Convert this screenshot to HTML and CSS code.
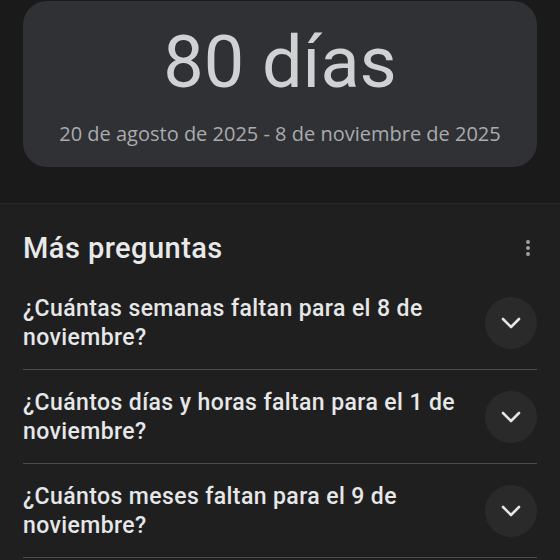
FILE: index.html
```html
<!DOCTYPE html>
<html lang="es">
<head>
  <meta charset="UTF-8" />
  <meta name="viewport" content="width=device-width, initial-scale=1.0"/>
  <title>Más preguntas</title>
  <link rel="stylesheet" href="styles.css">
</head>
<body>
  <div class="top">
    <div class="result-card">
      <div class="result-value">80 días</div>
      <div class="result-range">20 de agosto de 2025 - 8 de noviembre de 2025</div>
    </div>
  </div>

  <div class="questions">
    <div class="questions-head">
      <h2>Más preguntas</h2>
      <div class="more-btn">
        <span></span><span></span><span></span>
      </div>
    </div>

    <div class="question">
      <div class="question-text">¿Cuántas semanas faltan para el 8 de noviembre?</div>
      <div class="expand-btn">
        <svg width="20" height="12" viewBox="0 0 20 12"><path d="M2 2l8 8 8-8" /></svg>
      </div>
    </div>
    <div class="question">
      <div class="question-text">¿Cuántos días y horas faltan para el 1 de noviembre?</div>
      <div class="expand-btn">
        <svg width="20" height="12" viewBox="0 0 20 12"><path d="M2 2l8 8 8-8" /></svg>
      </div>
    </div>
    <div class="question">
      <div class="question-text">¿Cuántos meses faltan para el 9 de noviembre?</div>
      <div class="expand-btn">
        <svg width="20" height="12" viewBox="0 0 20 12"><path d="M2 2l8 8 8-8" /></svg>
      </div>
    </div>
  </div>
</body>
</html>
```

FILE: styles.css
```css
* { box-sizing: border-box; }
body {
  margin: 0;
  background-color: #1f1f1f;
  font-family: 'Open Sans', 'Noto Sans', sans-serif;
  color: #e8eaed;
  height: 560px;
  overflow: hidden;
}
.top {
  background-color: #1a1a1a;
  padding: 1px 23px 36px;
}
.result-card {
  background-color: #303134;
  border-radius: 24px;
  height: 166px;
  padding-top: 26px;
  text-align: center;
}
.result-value {
  font-family: Roboto, sans-serif;
  font-size: 72px; line-height: 72px;
  color: #d0d1d3;
}
.result-range {
  margin-top: 22px;
  font-size: 20px; line-height: 26px;
  color: #a9abae;
}
.questions {
  border-top: 1px solid #262626;
  padding: 26px 23px 0;
}
.questions-head {
  display: flex; align-items: center; justify-content: space-between;
  margin-bottom: 10px;
}
.questions-head h2 {
  margin: 0;
  font-family: Roboto, sans-serif;
  font-size: 29px; line-height: 36px; font-weight: 500;
  letter-spacing: 0.45px;
  color: #e8e9ea;
}
.more-btn {
  display: flex; flex-direction: column; gap: 2px;
  padding-right: 7px;
}
.more-btn span {
  width: 4px; height: 4px; border-radius: 50%;
  background-color: #9c9fa3;
}
.question {
  display: flex; align-items: center; gap: 16px;
  padding: 18px 0 17px;
  border-bottom: 1px solid #4a4b4d;
}
.question-text {
  flex: 1;
  font-family: Roboto, sans-serif;
  font-size: 23px; line-height: 29px; font-weight: 500;
  letter-spacing: 0.4px;
  color: #e6e7e8;
}
.expand-btn {
  width: 52px; height: 52px; border-radius: 50%;
  background-color: #2a2a2b;
  display: flex; align-items: center; justify-content: center;
}
.expand-btn svg path {
  fill: none; stroke: #e3e4e6; stroke-width: 2.6;
  stroke-linecap: round; stroke-linejoin: round;
}
```
